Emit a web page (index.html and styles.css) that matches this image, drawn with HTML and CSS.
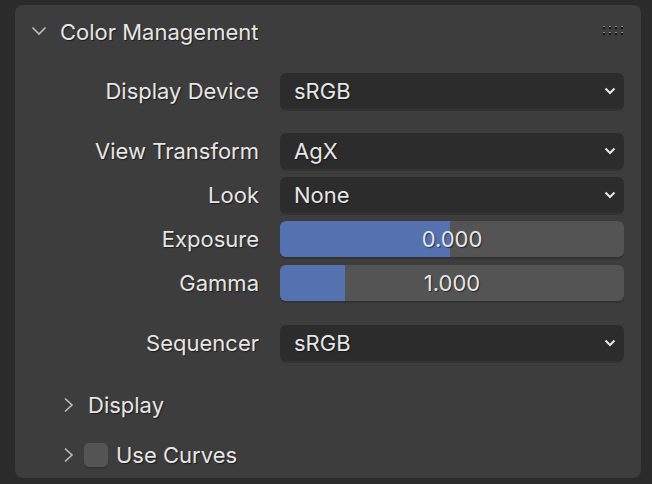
FILE: index.html
```html
<!DOCTYPE html>
<html>
<head>
<meta charset="utf-8">
<link rel="stylesheet" href="styles.css">
</head>
<body>
<div class="panel">
  <div class="header">
    <svg class="chev-down" width="16" height="10" viewBox="0 0 16 10"><path d="M1.5 1.5 L8 8 L14.5 1.5" fill="none" stroke="#bdbdbd" stroke-width="1.6"/></svg>
    <span class="title">Color Management</span>
    <span class="grip">
      <i></i><i></i><i></i><i></i><i></i><i></i><i></i><i></i>
    </span>
  </div>
  <div class="props">
    <div class="group">
      <div class="row"><span class="label">Display Device</span><div class="dropdown"><span>sRGB</span><svg width="12" height="8" viewBox="0 0 12 8"><path d="M1.5 1.5 L6 6 L10.5 1.5" fill="none" stroke="#e6e6e6" stroke-width="2"/></svg></div></div>
    </div>
    <div class="group">
      <div class="row"><span class="label">View Transform</span><div class="dropdown"><span>AgX</span><svg width="12" height="8" viewBox="0 0 12 8"><path d="M1.5 1.5 L6 6 L10.5 1.5" fill="none" stroke="#e6e6e6" stroke-width="2"/></svg></div></div>
      <div class="row"><span class="label">Look</span><div class="dropdown"><span>None</span><svg width="12" height="8" viewBox="0 0 12 8"><path d="M1.5 1.5 L6 6 L10.5 1.5" fill="none" stroke="#e6e6e6" stroke-width="2"/></svg></div></div>
      <div class="row"><span class="label">Exposure</span><div class="slider"><div class="fill" style="width:170px"></div><span class="val">0.000</span></div></div>
      <div class="row"><span class="label">Gamma</span><div class="slider"><div class="fill" style="width:65px"></div><span class="val">1.000</span></div></div>
    </div>
    <div class="group">
      <div class="row"><span class="label">Sequencer</span><div class="dropdown"><span>sRGB</span><svg width="12" height="8" viewBox="0 0 12 8"><path d="M1.5 1.5 L6 6 L10.5 1.5" fill="none" stroke="#e6e6e6" stroke-width="2"/></svg></div></div>
    </div>
  </div>
  <div class="subs">
    <div class="sub">
      <svg class="chev-right" width="12" height="16" viewBox="0 0 12 16"><path d="M2 1.5 L9 8 L2 14.5" fill="none" stroke="#bdbdbd" stroke-width="1.6"/></svg>
      <span class="subtitle">Display</span>
    </div>
    <div class="sub">
      <svg class="chev-right" width="12" height="16" viewBox="0 0 12 16"><path d="M2 1.5 L9 8 L2 14.5" fill="none" stroke="#bdbdbd" stroke-width="1.6"/></svg>
      <span class="check"></span>
      <span class="subtitle">Use Curves</span>
    </div>
  </div>
</div>
</body>
</html>
```

FILE: styles.css
```css
* { box-sizing: border-box; }
html, body { margin: 0; padding: 0; }
body {
  width: 652px;
  height: 484px;
  background: #2b2b2b;
  font-family: Inter, "Noto Sans", sans-serif;
  font-size: 22px;
  color: #e6e6e6;
  overflow: hidden;
  padding: 5px 11px 6px 15px;
}
.panel {
  background: #3d3d3d;
  border-radius: 8px;
  height: 473px;
  padding-right: 17px;
  overflow: hidden;
}
.header {
  height: 52px;
  display: flex;
  align-items: center;
  padding-left: 16px;
  padding-top: 2px;
}
.chev-down { margin-right: 13px; margin-top: -2px; }
.title {
  flex: 1;
  text-shadow: 1px 1px 1px rgba(0,0,0,0.55);
}
.grip {
  display: grid;
  grid-template-columns: repeat(4, 2px);
  grid-template-rows: repeat(2, 3px);
  column-gap: 4px;
  row-gap: 3px;
  margin-right: 1px;
  margin-top: -4px;
}
.grip i {
  display: block;
  width: 2px;
  height: 3px;
  background: linear-gradient(#8a8a8a 0 1px, #111 1px);
}
.props {
  padding-top: 16px;
  display: flex;
  flex-direction: column;
  gap: 24px;
}
.group {
  display: flex;
  flex-direction: column;
  gap: 8px;
}
.row {
  display: grid;
  grid-template-columns: 244px 1fr;
  column-gap: 21px;
  height: 36px;
  align-items: center;
}
.label {
  text-align: right;
  text-shadow: 1px 1px 1px rgba(0,0,0,0.55);
}
.dropdown {
  height: 36px;
  background: #2c2c2c;
  border-radius: 6px;
  box-shadow: 0 2px 0 #333333;
  display: flex;
  align-items: center;
  justify-content: space-between;
  padding: 0 8px 0 14px;
}
.dropdown span { text-shadow: 1px 1px 1px rgba(0,0,0,0.5); }
.slider {
  position: relative;
  height: 36px;
  background: #545454;
  border-radius: 6px;
  box-shadow: 0 2px 0 #333333;
  overflow: hidden;
  display: flex;
  align-items: center;
  justify-content: center;
}
.fill {
  position: absolute;
  left: 0; top: 0; bottom: 0;
  background: #5471b0;
}
.val {
  position: relative;
  text-shadow: 1px 1px 1px rgba(0,0,0,0.55);
}
.subs {
  margin-top: 22px;
  padding-left: 48px;
  display: flex;
  flex-direction: column;
  gap: 6px;
}
.sub {
  height: 44px;
  display: flex;
  align-items: center;
}
.chev-right { margin-right: 13px; }
.subtitle { text-shadow: 1px 1px 1px rgba(0,0,0,0.55); }
.check {
  width: 24px;
  height: 24px;
  border-radius: 5px;
  background: #545454;
  box-shadow: 0 2px 0 #333333;
  margin-left: -4px;
  margin-right: 8px;
}
```
